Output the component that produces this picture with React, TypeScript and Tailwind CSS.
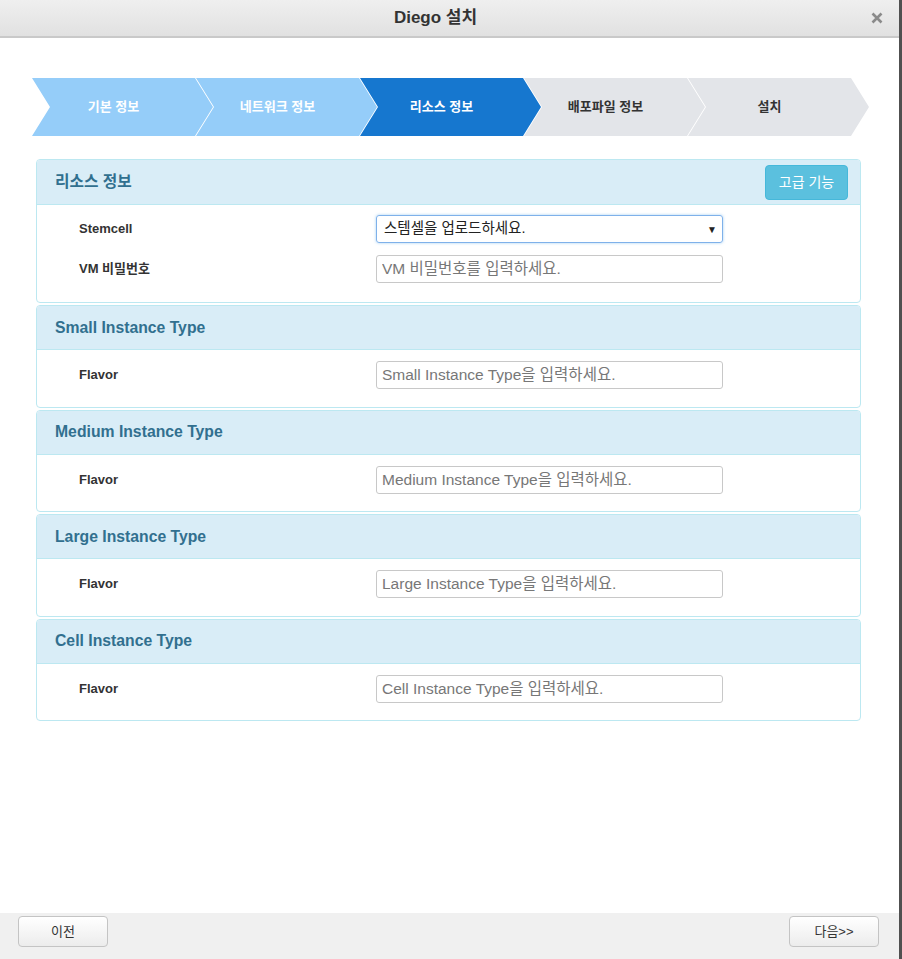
import React from "react";

const FONT = "font-['Liberation_Sans','Noto_Sans_CJK_KR',sans-serif]";

const steps = [
  { label: "기본 정보", cls: "bg-[#95cdf9] text-white" },
  { label: "네트워크 정보", cls: "bg-[#95cdf9] text-white" },
  { label: "리소스 정보", cls: "bg-[#1677cf] text-white" },
  { label: "배포파일 정보", cls: "bg-[#e3e5e9] text-[#333]" },
  { label: "설치", cls: "bg-[#e3e5e9] text-[#333]" },
];

const arrowClip =
  "[clip-path:polygon(0_0,calc(100%-18px)_0,100%_50%,calc(100%-18px)_100%,0_100%,18px_50%)]";

function Steps() {
  return (
    <div className="flex pl-[32px]">
      {steps.map((s, i) => (
        <div
          key={s.label}
          className={`${arrowClip} ${s.cls} ${i > 0 ? "-ml-[17px]" : ""} w-[181px] h-[58px] flex items-center justify-center pr-[18px] text-[13px] font-bold`}
        >
          {s.label}
        </div>
      ))}
    </div>
  );
}

function TextInput({ placeholder }: { placeholder: string }) {
  return (
    <input
      placeholder={placeholder}
      className={`${FONT} w-[347px] h-[28px] border border-[#c8c8c8] rounded-[3px] px-[5px] text-[15.5px] text-[#333] placeholder:text-[#777] outline-none bg-white`}
    />
  );
}

function Row({ label, children }: { label: string; children: React.ReactNode }) {
  return (
    <div className="flex items-center">
      <div className="w-[339px] pl-[42px] text-[13px] font-bold text-[#333]">{label}</div>
      {children}
    </div>
  );
}

function Panel({
  title,
  action,
  children,
}: {
  title: string;
  action?: React.ReactNode;
  children: React.ReactNode;
}) {
  return (
    <div className="w-[825px] ml-[36px] mb-[2px] border border-[#bce8f1] rounded-[4px] overflow-hidden">
      <div
        className={`${action ? "h-[45px]" : "h-[44px]"} bg-[#d9edf7] border-b border-[#bce8f1] flex items-center justify-between pl-[18px] pr-[12px]`}
      >
        <span className="text-[15.75px] font-bold text-[#31708f]">{title}</span>
        {action}
      </div>
      {children}
    </div>
  );
}

export default function App() {
  return (
    <div
      className={`${FONT} w-[902px] h-[959px] bg-white border-r-[3px] border-[#505050] flex flex-col`}
    >
      <div className="h-[38px] shrink-0 bg-gradient-to-b from-[#efefef] to-[#e1e1e1] border-b-2 border-[#c9c9c9] relative flex items-center justify-center">
        <span className="text-[17px] font-bold text-[#333] -ml-[28px]">Diego 설치</span>
        <svg
          className="absolute right-[16px] top-[12px]"
          width="12"
          height="12"
          viewBox="0 0 12 12"
        >
          <path d="M1.5 1.5 L10.5 10.5 M10.5 1.5 L1.5 10.5" stroke="#8a8a8a" strokeWidth="2.6" />
        </svg>
      </div>

      <div className="flex-1 pt-[40px]">
        <Steps />

        <div className="mt-[23px]">
          <Panel
            title="리소스 정보"
            action={
              <button className="w-[83px] h-[35px] rounded-[4px] bg-[#5bc0de] text-white text-[14px] border border-[#46b8da]">
                고급 기능
              </button>
            }
          >
            <div className="pt-[10px] pb-[19px] flex flex-col gap-[12px]">
              <Row label="Stemcell">
                <div className="w-[347px] h-[28px] border border-[#7fb1ea] rounded-[3px] shadow-[0_0_3px_rgba(102,175,233,0.6)] flex items-center justify-between pl-[7px] pr-[5px] text-[14.5px] text-[#222]">
                  <span>스템셀을 업로드하세요.</span>
                  <span className="text-[10px] text-[#222]">▼</span>
                </div>
              </Row>
              <Row label="VM 비밀번호">
                <TextInput placeholder="VM 비밀번호를 입력하세요." />
              </Row>
            </div>
          </Panel>

          {["Small", "Medium", "Large", "Cell"].map((t) => (
            <Panel key={t} title={`${t} Instance Type`}>
              <div className="pt-[11px] pb-[17.5px]">
                <Row label="Flavor">
                  <TextInput placeholder={`${t} Instance Type을 입력하세요.`} />
                </Row>
              </div>
            </Panel>
          ))}
        </div>
      </div>

      <div className="h-[46px] shrink-0 bg-[#f0f0f0] flex items-start justify-between pt-[3px] pl-[18px] pr-[20px]">
        <button className="w-[90px] h-[31px] rounded-[4px] border border-[#c4c4c4] bg-gradient-to-b from-white to-[#ececec] text-[13px] text-[#333]">
          이전
        </button>
        <button className="w-[90px] h-[31px] rounded-[4px] border border-[#c4c4c4] bg-gradient-to-b from-white to-[#ececec] text-[13px] text-[#333]">
          다음&gt;&gt;
        </button>
      </div>
    </div>
  );
}
